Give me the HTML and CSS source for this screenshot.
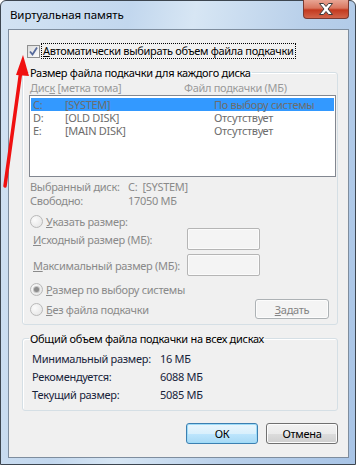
FILE: index.html
```html
<!DOCTYPE html>
<html lang="ru">
<head>
    <meta charset="UTF-8">
    <title>Виртуальная память</title>
    <link rel="stylesheet" href="styles.css">
</head>
<body>
    <div class="window">
        <div class="titlebar">
            <span class="title">Виртуальная память</span>
            <div class="close">
                <svg width="16" height="12" viewBox="0 0 16 12">
                    <path d="M1.5 0.5h4l2.5 3 2.5-3h4l-4.5 5.5 4.5 5.5h-4l-2.5-3-2.5 3h-4l4.5-5.5z" fill="#fff" stroke="#3c3c3c" stroke-width="1" stroke-linejoin="round"/>
                </svg>
            </div>
        </div>

        <div class="client">
            <div class="auto">
                <span class="checkbox">
                    <svg width="11" height="11" viewBox="0 0 11 11">
                        <path d="M2 5.5l2.5 3 4.5-7" fill="none" stroke="#55699b" stroke-width="1.8"/>
                    </svg>
                </span>
                <span class="focus"><u>А</u>втоматически выбирать объем файла подкачки</span>
            </div>

            <fieldset class="group drives">
                <legend>Размер файла подкачки для каждого диска</legend>
                <div class="list-head">
                    <span class="col-a">Дис<u>к</u> [метка тома]</span>
                    <span>Файл подкачки (МБ)</span>
                </div>
                <div class="listbox">
                    <div class="row selected"><span class="drv">C:</span><span class="lbl">[SYSTEM]</span><span>По выбору системы</span></div>
                    <div class="row"><span class="drv">D:</span><span class="lbl">[OLD DISK]</span><span>Отсутствует</span></div>
                    <div class="row"><span class="drv">E:</span><span class="lbl">[MAIN DISK]</span><span>Отсутствует</span></div>
                </div>
                <div class="info">
                    <span>Выбранный диск:</span><span>C:&nbsp;&nbsp;[SYSTEM]</span>
                    <span>Свободно:</span><span>17050 МБ</span>
                </div>

                <div class="radio-row first"><span class="radio"></span><u>У</u>казать размер:</div>
                <div class="field-row"><span><u>И</u>сходный размер (МБ):</span><span class="input"></span></div>
                <div class="field-row second"><span><u>М</u>аксимальный размер (МБ):</span><span class="input"></span></div>
                <div class="radio-row system"><span class="radio checked"></span><u>Р</u>азмер по выбору системы</div>
                <div class="radio-row last">
                    <span class="radio"></span><u>Б</u>ез файла подкачки
                    <span class="btn disabled"><u>З</u>адать</span>
                </div>
            </fieldset>

            <fieldset class="group total">
                <legend>Общий объем файла подкачки на всех дисках</legend>
                <div class="totals">
                    <span>Минимальный размер:</span><span>16 МБ</span>
                    <span>Рекомендуется:</span><span>6088 МБ</span>
                    <span>Текущий размер:</span><span>5085 МБ</span>
                </div>
            </fieldset>

            <div class="actions">
                <span class="btn default">ОК</span>
                <span class="btn">Отмена</span>
            </div>
        </div>

        <!-- red pointer drawn over the dialog -->
        <svg class="arrow" width="40" height="200" viewBox="0 0 40 200">
            <line x1="5" y1="186" x2="21" y2="70" stroke="#f01010" stroke-width="3.5" stroke-linecap="round"/>
            <polygon points="23,55 16,75 29,76" fill="#f01010"/>
        </svg>
    </div>
</body>
</html>
```

FILE: styles.css
```css
body {
    margin: 0;
    font-family: "Noto Sans", "Open Sans", sans-serif;
    font-size: 11px;
    letter-spacing: -0.3px;
    white-space: nowrap;
    color: #000;
}

.window {
    position: relative;
    width: 356px;
    height: 465px;
    box-sizing: border-box;
    display: flex;
    flex-direction: column;
    border: 1px solid #3d4650;
    border-radius: 6px 6px 0 0;
    background: linear-gradient(100deg, #d3e3f3 0%, #c2d7ee 30%, #d7e6f4 45%, #b9d0ea 70%, #a8c4e6 100%);
}

.titlebar {
    height: 28px;
    display: flex;
    justify-content: space-between;
    align-items: flex-start;
}

.title {
    margin: 6px 0 0 9px;
    line-height: 16px;
    font-size: 11.5px;
    letter-spacing: -0.1px;
}

.close {
    width: 46px;
    height: 19px;
    margin: -1px 6px 0 0;
    box-sizing: border-box;
    border: 1px solid #7a3a32;
    border-top: none;
    border-radius: 0 0 4px 4px;
    background: linear-gradient(#e8a594 0%, #d9765f 45%, #c3391f 55%, #d2644a 100%);
    display: flex;
    justify-content: center;
    align-items: center;
}

.client {
    flex: 1;
    margin: 0 6px 6px 7px;
    border: 1px solid #7e8d9e;
    background: #f0f0f0;
}

.auto {
    display: flex;
    align-items: center;
    height: 16px;
    margin: 13px 0 0 18px;
}

.checkbox {
    width: 13px;
    height: 13px;
    box-sizing: border-box;
    border: 1px solid #8e8f8f;
    background: linear-gradient(135deg, #dcdcdc, #fbfbfb);
    display: flex;
    align-items: center;
    justify-content: center;
}

.focus {
    margin-left: 1px;
    padding: 0 1px;
    line-height: 14px;
    border: 1px dotted #000;
}

.group {
    margin: 6px 0 0 13px;
    width: 316px;
    box-sizing: border-box;
    border: 1px solid #d5dfe5;
    border-radius: 3px;
    box-shadow: inset 1px 1px 0 #fff;
    padding: 1px 0 5px 6px;
}

.group legend {
    padding: 0 1px;
    line-height: 15px;
}

.list-head {
    display: flex;
    line-height: 14px;
    color: #9a9a9a;
}

.col-a {
    width: 154px;
    padding-left: 1px;
}

.listbox {
    width: 307px;
    height: 82px;
    box-sizing: border-box;
    border: 1px solid #828790;
    background: #fff;
    padding: 2px 1px;
    color: #6d6d6d;
}

.row {
    display: flex;
    height: 13px;
    line-height: 13px;
    padding-left: 2px;
}

.row.selected {
    background: #3399ff;
}

.drv {
    width: 32px;
}

.lbl {
    width: 149px;
}

.info {
    display: grid;
    grid-template-columns: 98px auto;
    line-height: 14px;
    margin: 3px 0 0 1px;
    color: #8a8a8a;
}

.radio-row {
    display: flex;
    align-items: center;
    height: 13px;
    padding-left: 1px;
    color: #8a8a8a;
}

.radio-row.first {
    margin-top: 7px;
}

.radio-row.system {
    margin-top: 6px;
    height: 14px;
}

.radio-row.last {
    margin-top: 3px;
    height: 20px;
}

.radio {
    width: 13px;
    height: 13px;
    box-sizing: border-box;
    border-radius: 50%;
    border: 1px solid #b9b9b9;
    background: radial-gradient(circle at 35% 35%, #fbfbfb, #e2e2e2);
    margin-right: 3px;
    display: flex;
    align-items: center;
    justify-content: center;
}

.radio.checked::after {
    content: "";
    width: 5px;
    height: 5px;
    border-radius: 50%;
    background: #8c8c8c;
    box-shadow: 0 0 0 1px #c4c4c4;
}

.field-row {
    display: grid;
    grid-template-columns: 154px 73px;
    align-items: center;
    padding-left: 4px;
    color: #8a8a8a;
}

.field-row.second {
    margin-top: 4px;
}

.input {
    height: 22px;
    box-sizing: border-box;
    border: 1px solid #b5b5b5;
    border-radius: 2px;
    background: #f4f4f4;
    box-shadow: inset 0 0 0 1px #fbfbfb;
}

.btn {
    width: 72px;
    height: 21px;
    box-sizing: border-box;
    border: 1px solid #707070;
    border-radius: 3px;
    background: linear-gradient(#f2f2f2 0%, #ebebeb 50%, #dddddd 51%, #cfcfcf 100%);
    box-shadow: inset 0 0 0 1px #fcfcfc;
    display: flex;
    align-items: center;
    justify-content: center;
    color: #000;
}

.btn.disabled {
    width: 74px;
    height: 20px;
    margin: 0 8px 0 auto;
    border-color: #adb2b5;
    background: #f4f4f4;
    color: #838383;
}

.btn.default {
    border-color: #3c7fb1;
    background: linear-gradient(#eaf6fd 0%, #d9f0fc 50%, #bee6fd 51%, #a7d9f5 100%);
    box-shadow: inset 0 0 0 1px #9fdcf8;
}

.group.total {
    padding: 3px 0 7px 6px;
}

.totals {
    display: grid;
    grid-template-columns: 128px auto;
    grid-auto-rows: 18px;
    align-items: center;
    padding-left: 3px;
    color: #17233a;
}

.actions {
    display: flex;
    justify-content: flex-end;
    gap: 8px;
    margin: 12px 10px 0 0;
}

.arrow {
    position: absolute;
    left: -1px;
    top: -1px;
}
```
